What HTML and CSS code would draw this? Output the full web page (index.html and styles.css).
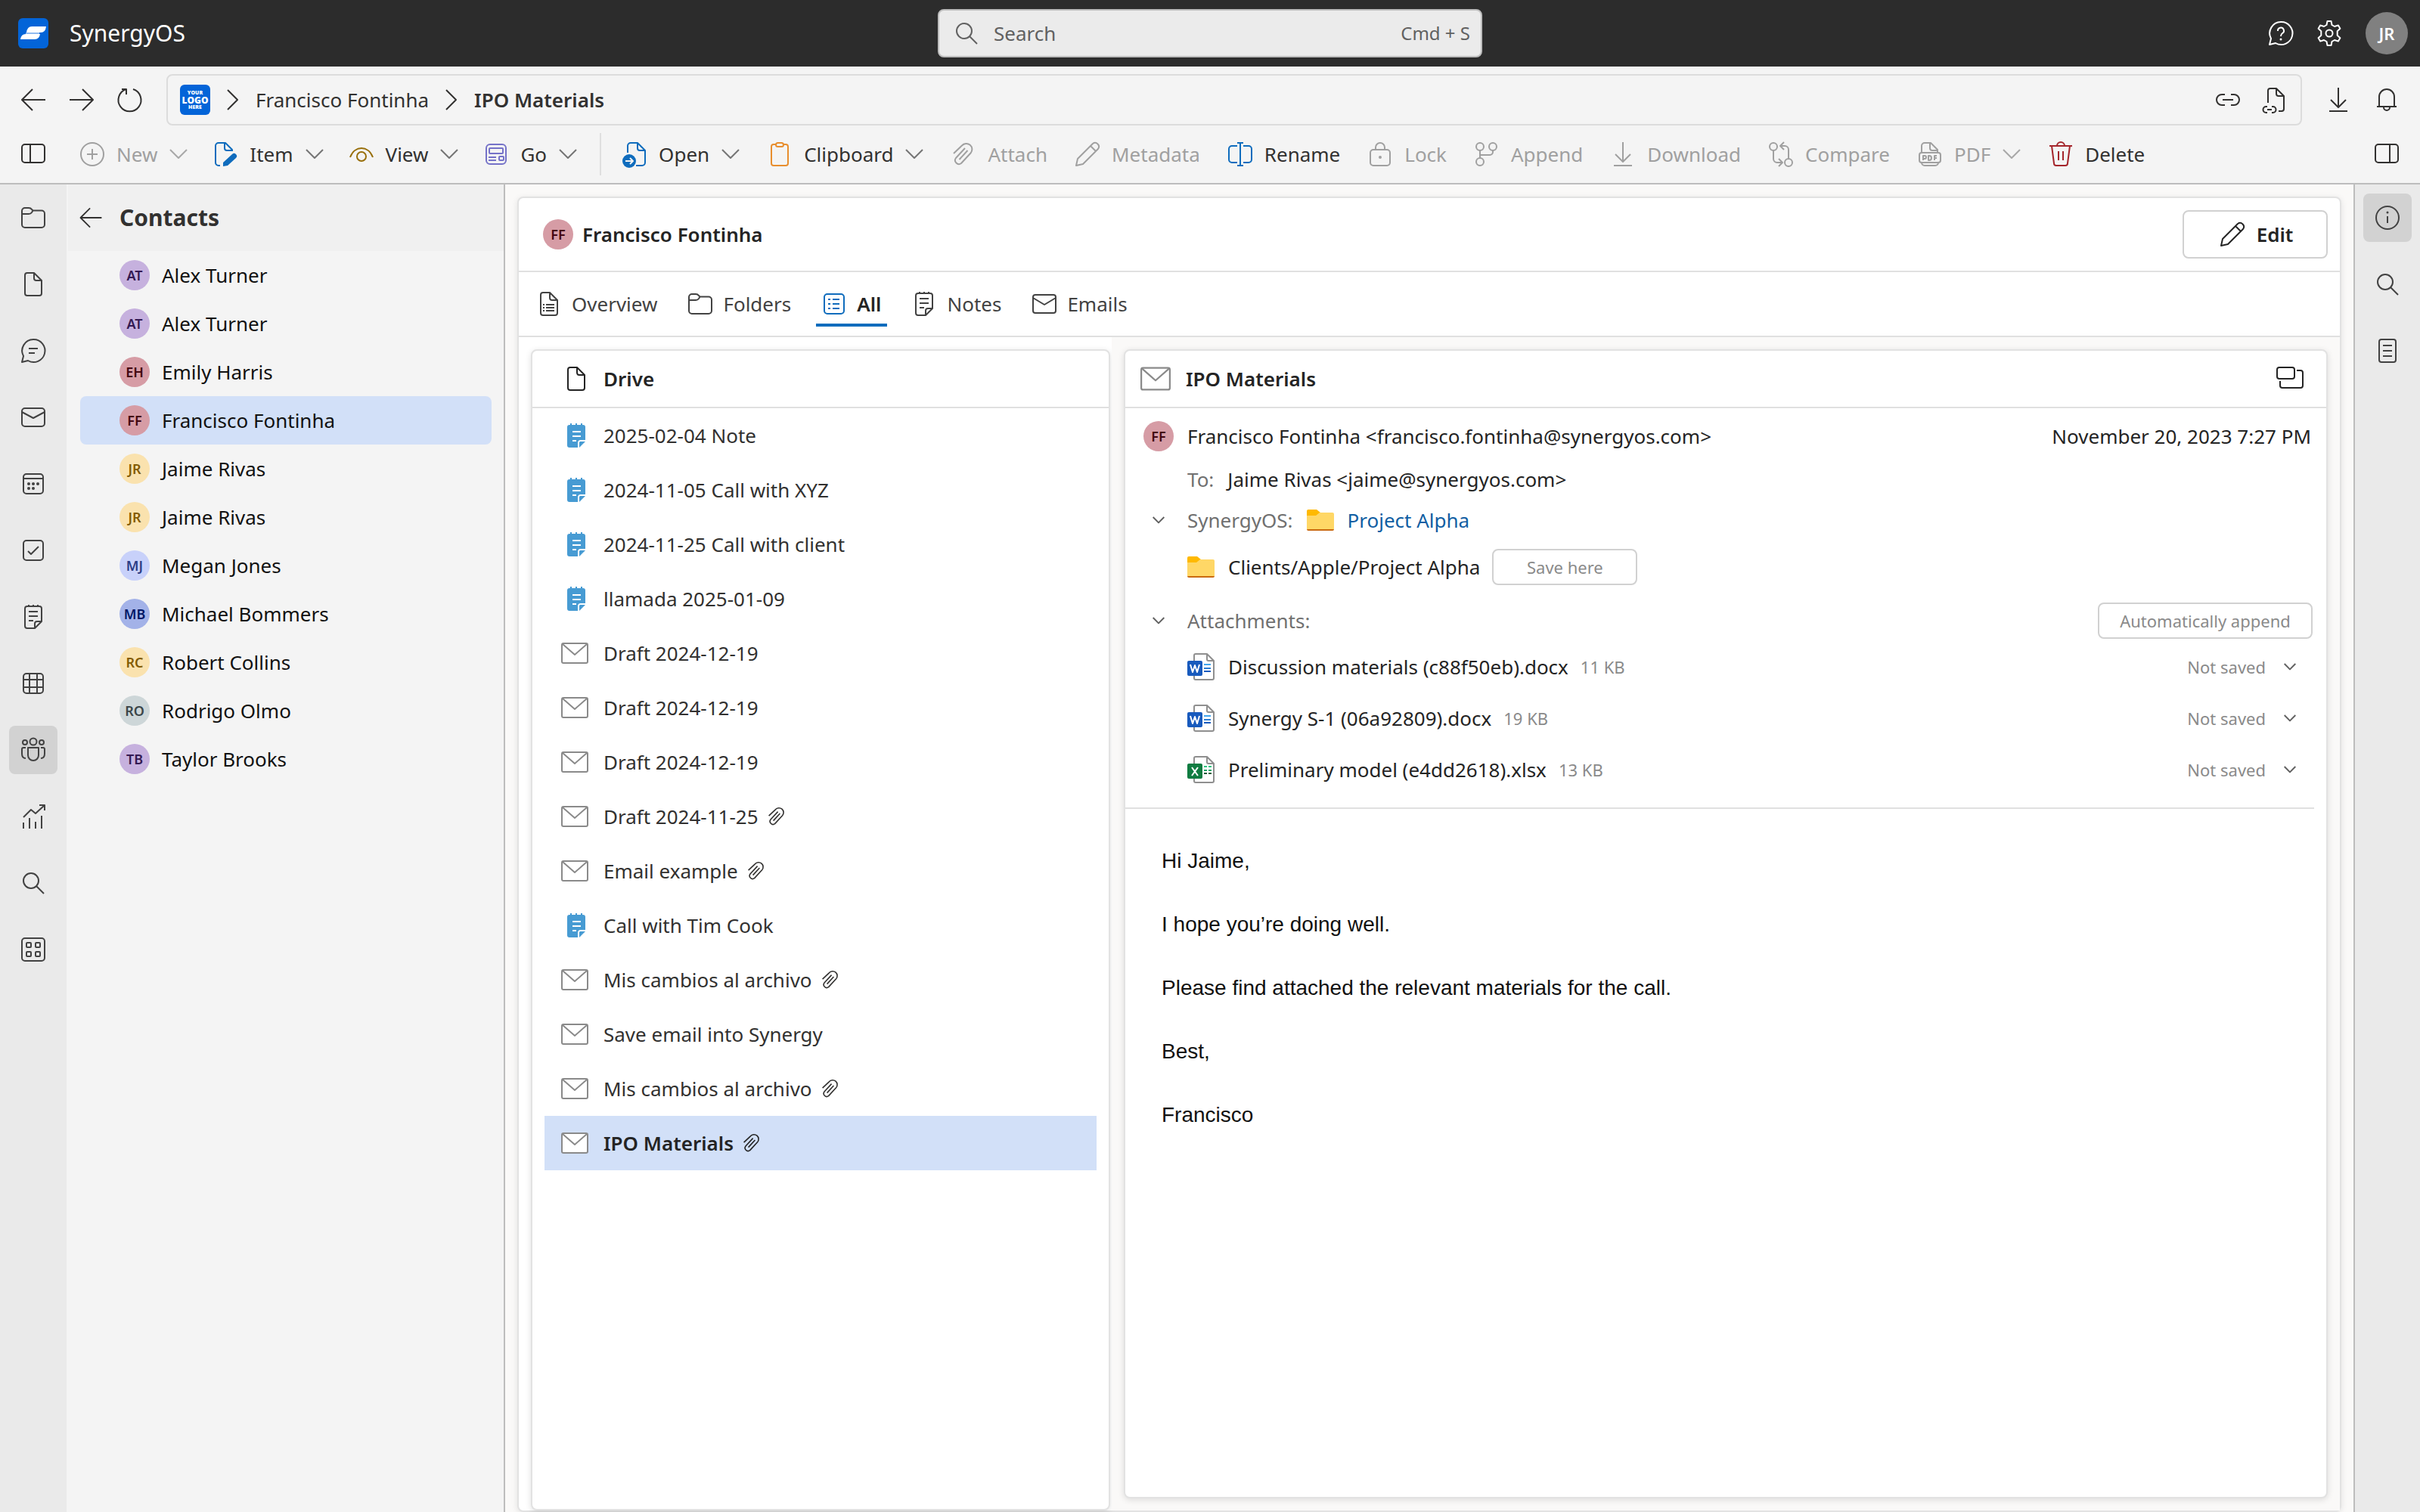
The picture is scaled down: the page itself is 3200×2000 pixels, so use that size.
FILE: index.html
```html
<!DOCTYPE html>
<html lang="en">
<head>
<meta charset="utf-8">
<title>SynergyOS - IPO Materials</title>
<link rel="stylesheet" href="styles.css">
</head>
<body>
<svg class="sprite" aria-hidden="true">
  <symbol id="i-search" viewBox="0 0 40 40"><circle cx="17" cy="17" r="10"/><path d="M24 24l10 10"/></symbol>
  <symbol id="i-help" viewBox="0 0 40 40"><path d="M20 5a15 15 0 1 1-7 28l-8 2 2-8A15 15 0 0 1 20 5z"/><path d="M16 17a4 4 0 1 1 6 3c-1.500 1-2 1.500-2 4"/><circle class="dot" cx="20" cy="28" r="1.500"/></symbol>
  <symbol id="i-gear" viewBox="0 0 40 40"><circle cx="20" cy="20" r="4.500"/><path d="M17.500 4h5l1 5 3.500 2 4.900-1.600 2.500 4.300-3.700 3.500v5.600l3.700 3.500-2.500 4.300-4.900-1.600-3.500 2-1 5h-5l-1-5-3.500-2-4.900 1.600-2.500-4.300 3.700-3.500v-5.600l-3.700-3.500 2.500-4.300 4.900 1.600 3.500-2z"/></symbol>
  <symbol id="i-back" viewBox="0 0 40 40"><path d="M36 20H5M19 6L5 20l14 14"/></symbol>
  <symbol id="i-forward" viewBox="0 0 40 40"><path d="M4 20h31M21 6l14 14-14 14"/></symbol>
  <symbol id="i-refresh" viewBox="0 0 40 40"><path d="M24 6a15 15 0 1 1-9 0M9 6h6v7"/></symbol>
  <symbol id="i-crumb" viewBox="0 0 16 28"><path d="M1 1l13 13L1 27"/></symbol>
  <symbol id="i-link" viewBox="0 0 40 40"><path d="M16 13h-4a7 7 0 0 0 0 14h4M24 13h4a7 7 0 0 1 0 14h-4M13 20h14"/></symbol>
  <symbol id="i-filelink" viewBox="0 0 40 40"><path d="M11 24V8a3 3 0 0 1 3-3h8l10 10v17a3 3 0 0 1-3 3h-4M22 5v7a3 3 0 0 0 3 3h7M10 29H8.500a4 4 0 0 0 0 8H10M16 29h1.500a4 4 0 0 1 0 8H16M10 33h6"/></symbol>
  <symbol id="i-download" viewBox="0 0 40 40"><path d="M20 4v25M10 20l10 10 10-10M8 35h24"/></symbol>
  <symbol id="i-bell" viewBox="0 0 40 40"><path d="M10 28V16a10 10 0 0 1 20 0v12M7 29h26M16 30a4 4 0 0 0 8 0"/></symbol>
  <symbol id="i-panel-l" viewBox="0 0 40 40"><rect x="5" y="7" width="30" height="24" rx="4"/><path d="M16 7v24"/></symbol>
  <symbol id="i-panel-r" viewBox="0 0 40 40"><rect x="5" y="7" width="30" height="24" rx="4"/><path d="M24 7v24"/></symbol>
  <symbol id="i-new" viewBox="0 0 40 40"><circle cx="20" cy="20" r="15"/><path d="M20 13v14M13 20h14"/></symbol>
  <symbol id="i-item" viewBox="0 0 40 40"><path d="M13 35h-2a4 4 0 0 1-4-4V9a4 4 0 0 1 4-4h9l9 9v2M19 5v7a3 3 0 0 0 3 3h7"/><path class="solid" d="M17 31l12-11a3.500 3.500 0 0 1 5 5L23 35l-6 1z"/></symbol>
  <symbol id="i-view" viewBox="0 0 40 40"><path d="M5 24c3-8 9-12 15-12s12 4 15 12"/><circle cx="20" cy="23" r="6"/></symbol>
  <symbol id="i-go" viewBox="0 0 40 40"><rect x="7" y="7" width="26" height="26" rx="5"/><rect x="11" y="12" width="18" height="7" rx="1"/><path d="M10 24h10M10 28h10"/><rect x="24" y="23" width="6" height="5" rx="1"/></symbol>
  <symbol id="i-open" viewBox="0 0 40 40"><path d="M11 18V9a4 4 0 0 1 4-4h9l10 10v16a4 4 0 0 1-4 4h-8M24 5v7a3 3 0 0 0 3 3h7"/><circle class="solid" cx="13" cy="29" r="9"/><path class="knock" d="M8 29h9M14 25l4 4-4 4"/></symbol>
  <symbol id="i-clip" viewBox="0 0 40 40"><path d="M16 7h-4a3 3 0 0 0-3 3v22a3 3 0 0 0 3 3h16a3 3 0 0 0 3-3V10a3 3 0 0 0-3-3h-4"/><rect x="15" y="5" width="10" height="5" rx="2.500"/></symbol>
  <symbol id="i-attach" viewBox="0 0 40 40"><path d="M7 19L18 8.500a7.500 7.500 0 0 1 11.500 10L17 32a5 5 0 0 1-7-7l12-13M25.500 15L14.500 27"/></symbol>
  <symbol id="i-pencil" viewBox="0 0 40 40"><path d="M5 35l2-9L27 6a5 5 0 0 1 7 7L14 33zM24 9l7 7"/></symbol>
  <symbol id="i-rename" viewBox="0 0 40 40"><path d="M16 9H9a4 4 0 0 0-4 4v14a4 4 0 0 0 4 4h7M24 9h7a4 4 0 0 1 4 4v14a4 4 0 0 1-4 4h-7M20 5v30M16 5h8M16 35h8"/></symbol>
  <symbol id="i-lock" viewBox="0 0 40 40"><rect x="7" y="14" width="26" height="21" rx="4"/><path d="M14 14v-3a6 6 0 0 1 12 0v3"/><circle class="dot" cx="20" cy="24" r="2"/></symbol>
  <symbol id="i-append" viewBox="0 0 40 40"><circle cx="11" cy="10" r="5"/><circle cx="28" cy="10" r="5"/><circle cx="11" cy="30" r="5"/><path d="M11 15v10M28 15v2a4 4 0 0 1-4 4H11"/></symbol>
  <symbol id="i-compare" viewBox="0 0 40 40"><circle cx="10" cy="10" r="5"/><circle cx="30" cy="31" r="5"/><path d="M10 15v11a5 5 0 0 0 5 5h6M17 26l5 5-5 5M30 26V14a5 5 0 0 0-5-5h-6M24 4l-5 5 5 5"/></symbol>
  <symbol id="i-pdf" viewBox="0 0 40 40"><path d="M9 18V9a4 4 0 0 1 4-4h8l9 9v4M20 5v7a3 3 0 0 0 3 3h7M9 31a4 4 0 0 0 4 4h14a4 4 0 0 0 4-4"/><rect x="6" y="18" width="28" height="13" rx="3"/><path d="M11 28v-6h2a2 2 0 0 1 0 4h-2M18 22v6h1a3 3 0 0 0 0-6zM26 28v-6h3M26 25h3"/></symbol>
  <symbol id="i-trash" viewBox="0 0 40 40"><path d="M5 9h30M15 9a5 5 0 0 1 10 0M8 9l3 23a3 3 0 0 0 3 3h12a3 3 0 0 0 3-3l3-23M17 16v12M23 16v12"/></symbol>
  <symbol id="i-down" viewBox="0 0 24 24"><path d="M1 6l11 11L23 6"/></symbol>
  <symbol id="i-folder" viewBox="0 0 40 40"><path d="M9 7h5c2 0 3 .500 4 2l1.500 1.500H31a4 4 0 0 1 4 4V29a4 4 0 0 1-4 4H9a4 4 0 0 1-4-4V11a4 4 0 0 1 4-4zM5 15h9c2 0 3-.500 4-2l1.500-2.500"/></symbol>
  <symbol id="i-file" viewBox="0 0 40 40"><path d="M12 5h9l10 10v17a3 3 0 0 1-3 3H12a3 3 0 0 1-3-3V8a3 3 0 0 1 3-3zM21 5v7a3 3 0 0 0 3 3h7"/></symbol>
  <symbol id="i-filelist" viewBox="0 0 40 40"><path d="M12 5h9l10 10v17a3 3 0 0 1-3 3H12a3 3 0 0 1-3-3V8a3 3 0 0 1 3-3zM21 5v7a3 3 0 0 0 3 3h7M16 21h11M16 25h11M16 29h11M12 21h2M12 25h2M12 29h2"/></symbol>
  <symbol id="i-chat" viewBox="0 0 40 40"><path d="M20 5a15 15 0 1 1-7 28l-8 2 2-8A15 15 0 0 1 20 5z"/><path d="M14 17h12M14 23h8"/></symbol>
  <symbol id="i-mail" viewBox="0 0 40 40"><rect x="5" y="8" width="30" height="24" rx="4"/><path d="M5 13l15 8 15-8"/></symbol>
  <symbol id="i-calendar" viewBox="0 0 40 40"><rect x="7" y="7" width="26" height="26" rx="4"/><path d="M7 13h26"/><g class="dot"><circle cx="14" cy="20" r="2"/><circle cx="20" cy="20" r="2"/><circle cx="26" cy="20" r="2"/><circle cx="14" cy="26" r="2"/><circle cx="20" cy="26" r="2"/></g></symbol>
  <symbol id="i-check" viewBox="0 0 40 40"><rect x="7" y="7" width="26" height="26" rx="4"/><path d="M13 21l4 4 10-10"/></symbol>
  <symbol id="i-note" viewBox="0 0 40 40"><path d="M12 6h16a3 3 0 0 1 3 3v17l-9 9H12a3 3 0 0 1-3-3V9a3 3 0 0 1 3-3zM22 35v-6a3 3 0 0 1 3-3h6M14 4v3M20 4v3M26 4v3M14 13h12M14 19h12M14 25h6"/></symbol>
  <symbol id="i-table" viewBox="0 0 40 40"><rect x="7" y="7" width="26" height="26" rx="4"/><path d="M15 7v26M25 7v26M7 15h26M7 25h26"/></symbol>
  <symbol id="i-people" viewBox="0 0 40 40"><circle cx="20" cy="9" r="4.500"/><circle cx="9" cy="10" r="3"/><circle cx="31" cy="10" r="3"/><path d="M13 17h14v10a7 7 0 0 1-14 0zM10 17H7a2 2 0 0 0-2 2v6c0 4 2 6 5 6M30 17h3a2 2 0 0 1 2 2v6c0 4-2 6-5 6"/></symbol>
  <symbol id="i-chart" viewBox="0 0 40 40"><path d="M7 36v-8M15 36V22M23 36v-9M31 36V19M7 21L17 11l6 5L35 5M28 5h7v7"/></symbol>
  <symbol id="i-apps" viewBox="0 0 40 40"><rect x="5" y="5" width="30" height="30" rx="4"/><rect x="11" y="11" width="6" height="6" rx="1"/><rect x="23" y="11" width="6" height="6" rx="1"/><rect x="11" y="23" width="6" height="6" rx="1"/><rect x="23" y="23" width="6" height="6" rx="1"/></symbol>
  <symbol id="i-info" viewBox="0 0 40 40"><circle cx="20" cy="20" r="15"/><path d="M20 18v9"/><circle class="dot" cx="20" cy="13" r="1.500"/></symbol>
  <symbol id="i-doc" viewBox="0 0 40 40"><rect x="9" y="5" width="22" height="30" rx="3"/><path d="M14 13h12M14 20h12M14 27h12"/></symbol>
  <symbol id="i-list" viewBox="0 0 40 40"><rect x="7" y="7" width="26" height="26" rx="4"/><path d="M18 14h9M18 20h9M18 26h9M12 14h3M12 20h3M12 26h3"/></symbol>
  <symbol id="i-tabmail" viewBox="0 0 40 40"><rect x="5" y="8" width="30" height="24" rx="3"/><path d="M5 12l15 9 15-9"/></symbol>
  <symbol id="i-pages" viewBox="0 0 40 40"><rect x="3" y="5" width="23" height="15" rx="3"/><path d="M29 9h5a3 3 0 0 1 3 3v17a3 3 0 0 1-3 3H10a3 3 0 0 1-3-3v-6"/></symbol>
  <symbol id="i-env" viewBox="0 0 36 28"><rect class="paper" x="1" y="1" width="34" height="26" rx="2"/><path d="M2 2l16 14L34 2"/></symbol>
  <symbol id="i-bluenote" viewBox="0 0 24 32"><path class="bluefill" d="M3 2h1V0h2v2h5V0h2v2h5V0h2v2h1a3 3 0 0 1 3 3v17h-6a4 4 0 0 0-4 4v6H3a3 3 0 0 1-3-3V5a3 3 0 0 1 3-3zM17 24h7l-8 8v-7z"/><path class="whiteline" d="M7 11h11M7 17h11M7 23h5"/></symbol>
  <symbol id="i-yfolder" viewBox="0 0 36 28"><path class="ytab" d="M2 0h11l5 4-4 5H0V2a2 2 0 0 1 2-2z"/><path class="ybody" d="M0 8h12l5-4h17a2 2 0 0 1 2 2v20H0z"/><path class="yedge" d="M0 26h36a2 2 0 0 1-2 2H2a2 2 0 0 1-2-2z"/></symbol>
  <symbol id="i-page" viewBox="0 0 36 36"><path class="sheet" d="M9 12V3a2 2 0 0 1 2-2h15l9 9v23a2 2 0 0 1-2 2H11a2 2 0 0 1-2-2v-4M26 1v7a2 2 0 0 0 2 2h7"/></symbol>
</svg>

<header class="topbar">
  <a class="brand" href="#">
    <svg class="logo" viewBox="0 0 40 40"><rect width="40" height="40" rx="6" fill="#0364d8"/><path fill="#fff" d="M18 11h19q-1 8-7 8H11q1-8 7-8z"/><path fill="#fff" d="M10 21h19q-1 7-7 7H3q1-7 7-7z"/><path fill="#8fbaf0" d="M10 19h18v2H10z"/></svg>
    <span>SynergyOS</span>
  </a>
  <label class="search">
    <svg class="icon"><use href="#i-search"/></svg>
    <input type="text" placeholder="Search" aria-label="Search">
    <span class="hint">Cmd + S</span>
  </label>
  <div class="top-actions">
    <button class="icon-btn" aria-label="Help"><svg class="icon"><use href="#i-help"/></svg></button>
    <button class="icon-btn" aria-label="Settings"><svg class="icon"><use href="#i-gear"/></svg></button>
    <button class="me">JR</button>
  </div>
</header>

<div class="chrome">
  <div class="address-row">
    <button class="icon-btn" aria-label="Back"><svg class="icon"><use href="#i-back"/></svg></button>
    <button class="icon-btn" aria-label="Forward"><svg class="icon"><use href="#i-forward"/></svg></button>
    <button class="icon-btn" aria-label="Reload"><svg class="icon"><use href="#i-refresh"/></svg></button>
    <nav class="address" aria-label="Breadcrumb">
      <a class="org" href="#"><span>YOUR</span><b>LOGO</b><span>HERE</span></a>
      <svg class="crumb"><use href="#i-crumb"/></svg>
      <a href="#">Francisco Fontinha</a>
      <svg class="crumb"><use href="#i-crumb"/></svg>
      <a class="current" href="#">IPO Materials</a>
      <span class="address-tools">
        <button class="icon-btn" aria-label="Copy link"><svg class="icon"><use href="#i-link"/></svg></button>
        <button class="icon-btn" aria-label="Copy file link"><svg class="icon"><use href="#i-filelink"/></svg></button>
      </span>
    </nav>
    <button class="icon-btn" aria-label="Downloads"><svg class="icon"><use href="#i-download"/></svg></button>
    <button class="icon-btn" aria-label="Notifications"><svg class="icon"><use href="#i-bell"/></svg></button>
  </div>
  <div class="toolbar">
    <button class="icon-btn" aria-label="Toggle left panel"><svg class="icon"><use href="#i-panel-l"/></svg></button>
    <div class="group first">
      <button class="tool" disabled><svg class="icon"><use href="#i-new"/></svg>New<svg class="down"><use href="#i-down"/></svg></button>
      <button class="tool"><svg class="icon blue"><use href="#i-item"/></svg>Item<svg class="down"><use href="#i-down"/></svg></button>
      <button class="tool"><svg class="icon brown"><use href="#i-view"/></svg>View<svg class="down"><use href="#i-down"/></svg></button>
      <button class="tool"><svg class="icon violet"><use href="#i-go"/></svg>Go<svg class="down"><use href="#i-down"/></svg></button>
    </div>
    <div class="group second">
      <button class="tool"><svg class="icon blue"><use href="#i-open"/></svg>Open<svg class="down"><use href="#i-down"/></svg></button>
      <button class="tool"><svg class="icon orange"><use href="#i-clip"/></svg>Clipboard<svg class="down"><use href="#i-down"/></svg></button>
      <button class="tool" disabled><svg class="icon"><use href="#i-attach"/></svg>Attach</button>
      <button class="tool" disabled><svg class="icon"><use href="#i-pencil"/></svg>Metadata</button>
      <button class="tool"><svg class="icon blue"><use href="#i-rename"/></svg>Rename</button>
      <button class="tool" disabled><svg class="icon"><use href="#i-lock"/></svg>Lock</button>
      <button class="tool" disabled><svg class="icon"><use href="#i-append"/></svg>Append</button>
      <button class="tool" disabled><svg class="icon"><use href="#i-download"/></svg>Download</button>
      <button class="tool" disabled><svg class="icon"><use href="#i-compare"/></svg>Compare</button>
      <button class="tool" disabled><svg class="icon"><use href="#i-pdf"/></svg>PDF<svg class="down"><use href="#i-down"/></svg></button>
      <button class="tool"><svg class="icon red"><use href="#i-trash"/></svg>Delete</button>
    </div>
    <button class="icon-btn end" aria-label="Toggle right panel"><svg class="icon"><use href="#i-panel-r"/></svg></button>
  </div>
</div>

<div class="workspace">
  <nav class="rail" aria-label="Sections">
    <a href="#" aria-label="Folders"><svg class="icon"><use href="#i-folder"/></svg></a>
    <a href="#" aria-label="Files"><svg class="icon"><use href="#i-file"/></svg></a>
    <a href="#" aria-label="Chat"><svg class="icon"><use href="#i-chat"/></svg></a>
    <a href="#" aria-label="Mail"><svg class="icon"><use href="#i-mail"/></svg></a>
    <a href="#" aria-label="Calendar"><svg class="icon"><use href="#i-calendar"/></svg></a>
    <a href="#" aria-label="Tasks"><svg class="icon"><use href="#i-check"/></svg></a>
    <a href="#" aria-label="Notes"><svg class="icon"><use href="#i-note"/></svg></a>
    <a href="#" aria-label="Tables"><svg class="icon"><use href="#i-table"/></svg></a>
    <a class="on" href="#" aria-label="Contacts"><svg class="icon"><use href="#i-people"/></svg></a>
    <a href="#" aria-label="Reports"><svg class="icon"><use href="#i-chart"/></svg></a>
    <a href="#" aria-label="Search"><svg class="icon"><use href="#i-search"/></svg></a>
    <a href="#" aria-label="Apps"><svg class="icon"><use href="#i-apps"/></svg></a>
  </nav>

  <aside class="contacts">
    <div class="contacts-head">
      <button class="icon-btn" aria-label="Back"><svg class="icon small"><use href="#i-back"/></svg></button>
      <h2>Contacts</h2>
    </div>
    <ul class="contact-list">
      <li><a href="#"><span class="avatar purple">AT</span>Alex Turner</a></li>
      <li><a href="#"><span class="avatar purple">AT</span>Alex Turner</a></li>
      <li><a href="#"><span class="avatar rose">EH</span>Emily Harris</a></li>
      <li><a class="on" href="#"><span class="avatar rose">FF</span>Francisco Fontinha</a></li>
      <li><a href="#"><span class="avatar gold">JR</span>Jaime Rivas</a></li>
      <li><a href="#"><span class="avatar gold">JR</span>Jaime Rivas</a></li>
      <li><a href="#"><span class="avatar lilac">MJ</span>Megan Jones</a></li>
      <li><a href="#"><span class="avatar indigo">MB</span>Michael Bommers</a></li>
      <li><a href="#"><span class="avatar gold">RC</span>Robert Collins</a></li>
      <li><a href="#"><span class="avatar steel">RO</span>Rodrigo Olmo</a></li>
      <li><a href="#"><span class="avatar purple">TB</span>Taylor Brooks</a></li>
    </ul>
  </aside>

  <main class="stage">
    <section class="card">
      <div class="card-head">
        <span class="avatar rose">FF</span>
        <h1>Francisco Fontinha</h1>
        <button class="edit"><svg class="icon"><use href="#i-pencil"/></svg>Edit</button>
      </div>
      <nav class="tabs" aria-label="Views">
        <a href="#"><svg class="icon"><use href="#i-filelist"/></svg>Overview</a>
        <a href="#"><svg class="icon"><use href="#i-folder"/></svg>Folders</a>
        <a class="on" href="#"><svg class="icon blue"><use href="#i-list"/></svg>All</a>
        <a href="#"><svg class="icon"><use href="#i-note"/></svg>Notes</a>
        <a href="#"><svg class="icon"><use href="#i-tabmail"/></svg>Emails</a>
      </nav>
      <div class="split">
        <div class="left-col">
          <section class="panel drive">
            <div class="panel-head"><svg class="icon"><use href="#i-file"/></svg><h2>Drive</h2></div>
            <ul class="items">
              <li><a href="#"><span class="kind"><svg class="note-icon"><use href="#i-bluenote"/></svg></span>2025-02-04 Note</a></li>
              <li><a href="#"><span class="kind"><svg class="note-icon"><use href="#i-bluenote"/></svg></span>2024-11-05 Call with XYZ</a></li>
              <li><a href="#"><span class="kind"><svg class="note-icon"><use href="#i-bluenote"/></svg></span>2024-11-25 Call with client</a></li>
              <li><a href="#"><span class="kind"><svg class="note-icon"><use href="#i-bluenote"/></svg></span>llamada 2025-01-09</a></li>
              <li><a href="#"><span class="kind"><svg class="env"><use href="#i-env"/></svg></span>Draft 2024-12-19</a></li>
              <li><a href="#"><span class="kind"><svg class="env"><use href="#i-env"/></svg></span>Draft 2024-12-19</a></li>
              <li><a href="#"><span class="kind"><svg class="env"><use href="#i-env"/></svg></span>Draft 2024-12-19</a></li>
              <li><a href="#"><span class="kind"><svg class="env"><use href="#i-env"/></svg></span>Draft 2024-11-25<svg class="clip"><use href="#i-attach"/></svg></a></li>
              <li><a href="#"><span class="kind"><svg class="env"><use href="#i-env"/></svg></span>Email example<svg class="clip"><use href="#i-attach"/></svg></a></li>
              <li><a href="#"><span class="kind"><svg class="note-icon"><use href="#i-bluenote"/></svg></span>Call with Tim Cook</a></li>
              <li><a href="#"><span class="kind"><svg class="env"><use href="#i-env"/></svg></span>Mis cambios al archivo<svg class="clip"><use href="#i-attach"/></svg></a></li>
              <li><a href="#"><span class="kind"><svg class="env"><use href="#i-env"/></svg></span>Save email into Synergy</a></li>
              <li><a href="#"><span class="kind"><svg class="env"><use href="#i-env"/></svg></span>Mis cambios al archivo<svg class="clip"><use href="#i-attach"/></svg></a></li>
              <li><a class="on" href="#"><span class="kind"><svg class="env"><use href="#i-env"/></svg></span>IPO Materials<svg class="clip"><use href="#i-attach"/></svg></a></li>
            </ul>
          </section>
        </div>
        <div class="right-col">
          <article class="panel mail">
            <div class="panel-head mail-head"><svg class="env large"><use href="#i-env"/></svg><h2>IPO Materials</h2><button class="icon-btn end" aria-label="Open in new window"><svg class="icon"><use href="#i-pages"/></svg></button></div>
            <div class="meta">
              <div class="line from"><span class="lead"><span class="avatar rose">FF</span></span><span>Francisco Fontinha &lt;francisco.fontinha@synergyos.com&gt;</span><time>November 20, 2023 7:27 PM</time></div>
              <div class="line to"><span class="lead"></span><span class="label">To:</span><span>Jaime Rivas &lt;jaime@synergyos.com&gt;</span></div>
              <div class="line place"><button class="lead" aria-label="Collapse"><svg class="fold"><use href="#i-down"/></svg></button><span class="label">SynergyOS:</span><svg class="yfolder"><use href="#i-yfolder"/></svg><a class="link" href="#">Project Alpha</a></div>
              <div class="line path"><span class="lead"></span><svg class="yfolder"><use href="#i-yfolder"/></svg><span>Clients/Apple/Project Alpha</span><button class="mini save">Save here</button></div>
              <div class="line attachments"><button class="lead" aria-label="Collapse"><svg class="fold"><use href="#i-down"/></svg></button><span class="label">Attachments:</span><button class="mini auto">Automatically append</button></div>
              <div class="line att"><span class="lead"></span><svg class="ftype" viewBox="0 0 36 36"><use href="#i-page"/><rect y="10" width="20" height="20" rx="2" fill="#185abd" stroke="none"/><path class="wline" d="M4 15l3 10 3-9 3 9 3-10"/><path stroke="#41a5ee" stroke-width="2" d="M22 15h9"/><path stroke="#2b7cd3" stroke-width="2" d="M22 20h9"/><path stroke="#185abd" stroke-width="2" d="M22 24h9"/></svg><a href="#">Discussion materials (c88f50eb).docx</a><span class="size">11 KB</span><button class="status">Not saved<svg class="fold"><use href="#i-down"/></svg></button></div>
              <div class="line att"><span class="lead"></span><svg class="ftype" viewBox="0 0 36 36"><use href="#i-page"/><rect y="10" width="20" height="20" rx="2" fill="#185abd" stroke="none"/><path class="wline" d="M4 15l3 10 3-9 3 9 3-10"/><path stroke="#41a5ee" stroke-width="2" d="M22 15h9"/><path stroke="#2b7cd3" stroke-width="2" d="M22 20h9"/><path stroke="#185abd" stroke-width="2" d="M22 24h9"/></svg><a href="#">Synergy S-1 (06a92809).docx</a><span class="size">19 KB</span><button class="status">Not saved<svg class="fold"><use href="#i-down"/></svg></button></div>
              <div class="line att"><span class="lead"></span><svg class="ftype" viewBox="0 0 36 36"><use href="#i-page"/><rect y="10" width="20" height="20" rx="2" fill="#107c41" stroke="none"/><path class="wline" d="M6 15l8 11M14 15L6 26"/><path stroke="#33c481" stroke-width="2" d="M22 14h4M28 14h4"/><path stroke="#21a366" stroke-width="2" d="M22 19h4M28 19h4"/><path stroke="#185c37" stroke-width="2" d="M22 23h4M28 23h4"/></svg><a href="#">Preliminary model (e4dd2618).xlsx</a><span class="size">13 KB</span><button class="status">Not saved<svg class="fold"><use href="#i-down"/></svg></button></div>
            </div>
            <div class="message">
              <p>Hi Jaime,</p>
              <p>I hope you’re doing well.</p>
              <p>Please find attached the relevant materials for the call.</p>
              <p>Best,</p>
              <p>Francisco</p>
            </div>
          </article>
        </div>
      </div>
    </section>
  </main>

  <nav class="rail right" aria-label="Details">
    <a class="on" href="#" aria-label="Info"><svg class="icon"><use href="#i-info"/></svg></a>
    <a href="#" aria-label="Find"><svg class="icon"><use href="#i-search"/></svg></a>
    <a href="#" aria-label="Document"><svg class="icon"><use href="#i-doc"/></svg></a>
  </nav>
</div>
</body>
</html>
```
FILE: styles.css
```css
* { box-sizing: border-box; }
body {
  margin: 0;
  height: 100vh;
  overflow: hidden;
  display: flex;
  flex-direction: column;
  font: 26px/40px "Noto Sans", "Open Sans", sans-serif;
  color: #242424;
  background: #f4f4f4;
}
button, input { font: inherit; color: inherit; background: none; border: 0; padding: 0; margin: 0; }
a { color: inherit; text-decoration: none; }
ul { list-style: none; margin: 0; padding: 0; }
h1, h2 { margin: 0; font-size: 26px; font-weight: 600; }
svg { flex: none; fill: none; stroke: currentColor; stroke-width: 2; stroke-linecap: butt; stroke-linejoin: round; }
.sprite { position: absolute; width: 0; height: 0; }
.dot, .solid { fill: currentColor; stroke: none; }
.knock { stroke: #f4f4f4; }
.paper { fill: #fff; }
.bluefill { fill: #479bd3; stroke: none; }
.whiteline { stroke: #fff; }
.ytab { fill: #ffb900; stroke: none; }
.ybody { fill: #ffd766; stroke: none; }
.yedge { fill: #ca6a10; stroke: none; }
.sheet { fill: #fff; stroke: #8f8f8f; }
.wline { stroke: #fff; }
.icon { width: 40px; height: 40px; display: block; }
.icon-btn { display: flex; }
.blue { color: #0f6cbd; }
.brown { color: #986f0b; }
.violet { color: #7572c8; }
.orange { color: #e88e2e; }
.red { color: #a4262c; }
.end { margin-left: auto; }

/* Top bar */
.topbar {
  flex: none;
  height: 88px;
  display: grid;
  grid-template-columns: 1fr 720px 1fr;
  align-items: center;
  background: #2c2c2c;
  color: #fff;
  padding: 0 16px 0 24px;
}
.brand { display: flex; align-items: center; gap: 28px; font-size: 30px; }
.logo { width: 40px; height: 40px; stroke: none; }
.search {
  height: 64px;
  margin-left: -4px;
  margin-right: 4px;
  display: flex;
  align-items: center;
  gap: 16px;
  padding: 0 14px 0 16px;
  border: 2px solid #bdbdbd;
  border-radius: 8px;
  background: #ebebeb;
  color: #616161;
}
.search input { flex: 1; min-width: 0; outline: 0; }
.search input::placeholder { color: #616161; opacity: 1; }
.hint { font-size: 24px; }
.top-actions { display: flex; justify-content: flex-end; align-items: center; gap: 24px; }
.me { width: 56px; height: 56px; border-radius: 50%; background: #808080; font-size: 22px; font-weight: 600; margin-left: 4px; }

/* Address bar and toolbar */
.chrome { flex: none; border-bottom: 2px solid #bdbdbd; }
.address-row { display: flex; align-items: center; gap: 24px; padding: 10px 24px 0; color: #323130; }
.address {
  flex: 1;
  height: 68px;
  display: flex;
  align-items: center;
  gap: 22px;
  margin: 0 4px 0 4px;
  padding: 0 14px 0 16px;
  border: 2px solid #dcdcdc;
  border-radius: 8px;
}
.current { font-weight: 600; }
.org {
  width: 40px;
  height: 40px;
  display: flex;
  flex-direction: column;
  justify-content: center;
  align-items: center;
  border-radius: 6px;
  background: #0364d8;
  color: #fff;
  font: 800 7px/8px "Open Sans", sans-serif;
}
.org b { font-size: 12px; line-height: 11px; }
.crumb { width: 16px; height: 28px; }
.address-tools { margin-left: auto; display: flex; gap: 22px; }
.toolbar { height: 76px; display: flex; align-items: center; padding: 0 24px; color: #323130; }
.group { height: 56px; display: flex; align-items: center; }
.first { gap: 30px; margin-left: 38px; }
.second { gap: 33px; margin-left: 30px; padding-left: 24px; border-left: 2px solid #dfdfdf; }
.tool { display: flex; align-items: center; gap: 12px; }
.tool:disabled { color: #a0a0a0; }
.down { width: 24px; height: 24px; margin-left: 4px; color: #757575; }
.tool:disabled .down { color: #a8a8a8; }

/* Workspace */
.workspace { flex: 1; min-height: 0; display: flex; }
.rail { flex: none; width: 88px; padding-top: 12px; display: flex; flex-direction: column; align-items: center; gap: 24px; background: #eaeaea; color: #424242; }
.rail.right { border-left: 2px solid #bdbdbd; }
.rail a { width: 64px; height: 64px; display: grid; place-items: center; border-radius: 8px; }
.rail .on { background: #d2d2d2; }
.contacts { flex: none; width: 580px; border-right: 2px solid #bdbdbd; }
.contacts-head { height: 88px; display: flex; align-items: center; gap: 20px; padding: 0 12px; background: #f0f0f0; border-left: 2px solid #f4f4f4; color: #323130; }
.contacts-head h2 { font-size: 30px; font-weight: 700; }
.icon.small { width: 36px; height: 36px; }
.contact-list { padding: 0 16px 0 18px; color: #111; }
.contact-list a { height: 64px; display: flex; align-items: center; gap: 16px; padding-left: 52px; border-radius: 8px; }
.contact-list .on { background: #d2e0f8; }
.avatar { flex: none; width: 40px; height: 40px; display: grid; place-items: center; border-radius: 50%; font-size: 18px; font-weight: 600; }
.purple { background: #c6b1de; color: #341a53; }
.rose { background: #d69ca5; color: #420610; }
.gold { background: #fae2ae; color: #835b00; }
.lilac { background: #c8d1fa; color: #2c3c85; }
.indigo { background: #a3b2e8; color: #001665; }
.steel { background: #cdd6d8; color: #3b4649; }

.stage { flex: 1; min-width: 0; padding: 16px 16px 0; background: #faf9f8; }
.card { height: 100%; display: flex; flex-direction: column; border: 2px solid #e2e2e2; border-radius: 8px; background: #fff; box-shadow: 0 2px 8px rgba(0, 0, 0, .1); }
.card-head { height: 98px; flex: none; display: flex; align-items: center; gap: 12px; padding: 0 16px 0 32px; border-bottom: 2px solid #e0e0e0; }
.edit { width: 192px; height: 64px; margin-left: auto; display: flex; align-items: center; justify-content: center; gap: 12px; border: 2px solid #d1d1d1; border-radius: 8px; font-weight: 600; }
.tabs { height: 86px; flex: none; display: flex; align-items: center; gap: 25px; padding: 0 16px; border-bottom: 2px solid #e0e0e0; color: #424242; }
.tabs a { height: 60px; display: flex; align-items: center; gap: 10px; padding: 0 8px 0 4px; border-bottom: 4px solid transparent; border-top: 4px solid transparent; }
.tabs .on { font-weight: 600; color: #242424; border-bottom-color: #0f6cbd; }
.split { flex: 1; min-height: 0; display: grid; grid-template-columns: 784fr 1624fr; }
.left-col { padding: 16px 2px 0 16px; min-height: 0; }
.right-col { padding: 16px; min-height: 0; background: #faf9f8; }
.panel { height: 100%; border: 2px solid #e2e2e2; border-radius: 8px; background: #fff; box-shadow: 0 2px 8px rgba(0, 0, 0, .12); }
.panel-head { height: 76px; display: flex; align-items: center; gap: 16px; padding-left: 38px; border-bottom: 2px solid #e0e0e0; }
.items { padding: 0 16px; color: #323130; }
.items a { height: 72px; display: flex; align-items: center; padding-left: 16px; }
.items .on { background: #d2e0f8; font-weight: 600; color: #242424; }
.kind { width: 62px; display: flex; padding-left: 6px; }
.env { width: 36px; height: 28px; color: #8a8a8a; }
.note-icon { width: 24px; height: 32px; margin-left: 8px; }
.clip { width: 32px; height: 32px; margin-left: 8px; }

.mail-head { padding: 0 28px 0 20px; gap: 20px; }
.env.large { width: 40px; height: 32px; }
.line { display: flex; align-items: center; padding-right: 4px; }
.lead { flex: none; width: 82px; display: flex; justify-content: flex-end; padding-right: 18px; }
.from { height: 74px; }
.from time { margin-left: auto; }
.to { height: 40px; }
.label { color: #707070; margin-right: 18px; }
.place { height: 68px; }
.place .fold, .attachments .fold { margin-right: 12px; }
.link { color: #115ea3; }
.yfolder { width: 36px; height: 28px; margin-right: 18px; }
.path { height: 56px; }
.mini { height: 48px; border: 2px solid #d1d1d1; border-radius: 8px; color: #8a8a8a; font-size: 22px; line-height: 40px; }
.save { width: 192px; margin-left: 16px; }
.attachments { height: 54px; margin-top: 16px; padding-right: 2px; }
.auto { width: 284px; margin-left: auto; }
.att { height: 68px; }
.ftype { width: 36px; height: 36px; margin-right: 18px; }
.size { font-size: 22px; color: #8a8a8a; margin-left: 16px; }
.status { margin-left: auto; display: flex; align-items: center; gap: 24px; padding-right: 20px; font-size: 22px; color: #8a8a8a; }
.fold { width: 16px; height: 16px; color: #616161; stroke-width: 3; }
.meta { padding-bottom: 16px; margin-right: 16px; border-bottom: 2px solid #e0e0e0; }
.message { padding: 48px; font: 28px/42px "Liberation Sans", Arial, sans-serif; color: #111; }
.message p { margin: 0 0 42px; }
```
